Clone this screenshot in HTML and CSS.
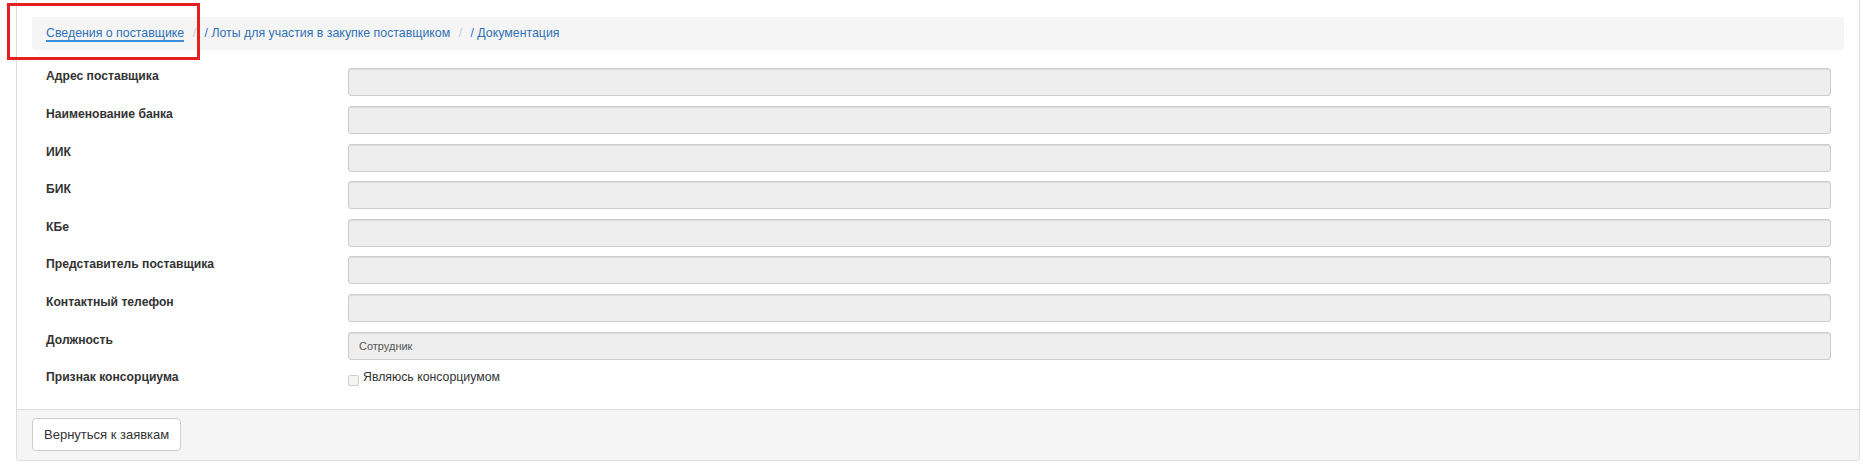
FILE: index.html
```html
<!DOCTYPE html>
<html lang="ru">
<head>
<meta charset="utf-8">
<title>Сведения о поставщике</title>
<link rel="stylesheet" href="styles.css">
</head>
<body>
<div class="panel">
  <div class="panel-body">
    <ol class="breadcrumb">
      <li><a class="crumb active">Сведения о поставщике</a></li>
      <li><a class="crumb">/ Лоты для участия в закупке поставщиком</a></li>
      <li><a class="crumb">/ Документация</a></li>
    </ol>
    <div class="form">
      <div class="row"><label class="lbl">Адрес поставщика</label><div class="ctl"><input class="form-control" type="text" readonly value=""></div></div>
      <div class="row"><label class="lbl">Наименование банка</label><div class="ctl"><input class="form-control" type="text" readonly value=""></div></div>
      <div class="row"><label class="lbl">ИИК</label><div class="ctl"><input class="form-control" type="text" readonly value=""></div></div>
      <div class="row"><label class="lbl">БИК</label><div class="ctl"><input class="form-control" type="text" readonly value=""></div></div>
      <div class="row"><label class="lbl">КБе</label><div class="ctl"><input class="form-control" type="text" readonly value=""></div></div>
      <div class="row"><label class="lbl">Представитель поставщика</label><div class="ctl"><input class="form-control" type="text" readonly value=""></div></div>
      <div class="row"><label class="lbl">Контактный телефон</label><div class="ctl"><input class="form-control" type="text" readonly value=""></div></div>
      <div class="row"><label class="lbl">Должность</label><div class="ctl"><input class="form-control" type="text" readonly value="Сотрудник"></div></div>
      <div class="row last"><label class="lbl">Признак консорциума</label><div class="ctl"><label class="check"><span class="box"></span><span class="check-text">Являюсь консорциумом</span></label></div></div>
    </div>
  </div>
  <div class="panel-footer">
    <button class="btn" type="button">Вернуться к заявкам</button>
  </div>
</div>
<div class="highlight"></div>
</body>
</html>
```

FILE: styles.css
```css
html, body {
  margin: 0;
  padding: 0;
  background: #fff;
}

body {
  font-family: "Liberation Sans", Arial, sans-serif;
  font-size: 12px;
  line-height: 17px;
  color: #333;
  position: relative;
}

.panel {
  margin-left: 16px;
  width: 1844px;
  box-sizing: border-box;
  border: 1px solid #ddd;
  border-top: none;
  border-radius: 0 0 4px 4px;
  background: #fff;
}

.panel-body {
  padding: 17px 15px 11.8px 15px;
}

.breadcrumb {
  list-style: none;
  margin: 0 0 18.4px 0;
  padding: 8px 14px;
  background: #f5f5f5;
  border-radius: 4px;
  font-size: 12.35px;
  line-height: 17px;
}

.breadcrumb li {
  display: inline-block;
}

.breadcrumb li + li::before {
  content: "/\00a0";
  padding: 0 5px;
  color: #ccc;
}

.crumb {
  color: #2f72b4;
  text-decoration: none;
}

.crumb.active {
  border-bottom: 2px solid #3a8edb;
}

.form {
  padding: 0 13px 0 14px;
}

.row {
  display: grid;
  grid-template-columns: 302px 1fr;
  min-height: 28px;
  margin-bottom: 9.6px;
}

.row.last {
  margin-bottom: 0;
}

.lbl {
  font-weight: bold;
  font-size: 12.15px;
  line-height: 17px;
  color: #333;
}

.form-control {
  display: block;
  width: 100%;
  height: 28px;
  box-sizing: border-box;
  margin: 0;
  padding: 0 10px;
  font-family: "Liberation Sans", Arial, sans-serif;
  font-size: 11px;
  color: #555;
  background: #eee;
  border: 1px solid #ccc;
  border-radius: 3px;
  box-shadow: inset 0 1px 1px rgba(0, 0, 0, 0.075);
  outline: none;
}

.check {
  display: flex;
  align-items: flex-start;
  font-size: 12.3px;
  line-height: 17px;
  color: #333;
}

.box {
  width: 11px;
  height: 11px;
  box-sizing: border-box;
  margin-top: 6px;
  margin-right: 4px;
  border: 1px solid #cfcfcf;
  border-radius: 2px;
  background: #f4f4f4;
}

.panel-footer {
  padding: 8px 15px 9px 15px;
  background: #f5f5f5;
  border-top: 1px solid #ddd;
  border-radius: 0 0 3px 3px;
}

.btn {
  display: block;
  height: 33px;
  padding: 0 11px;
  font-family: "Liberation Sans", Arial, sans-serif;
  font-size: 13px;
  color: #333;
  background: #fff;
  border: 1px solid #ccc;
  border-radius: 4px;
}

.highlight {
  position: absolute;
  left: 7px;
  top: 3px;
  width: 193px;
  height: 57px;
  box-sizing: border-box;
  border: 3px solid #e3211f;
  pointer-events: none;
}
```
